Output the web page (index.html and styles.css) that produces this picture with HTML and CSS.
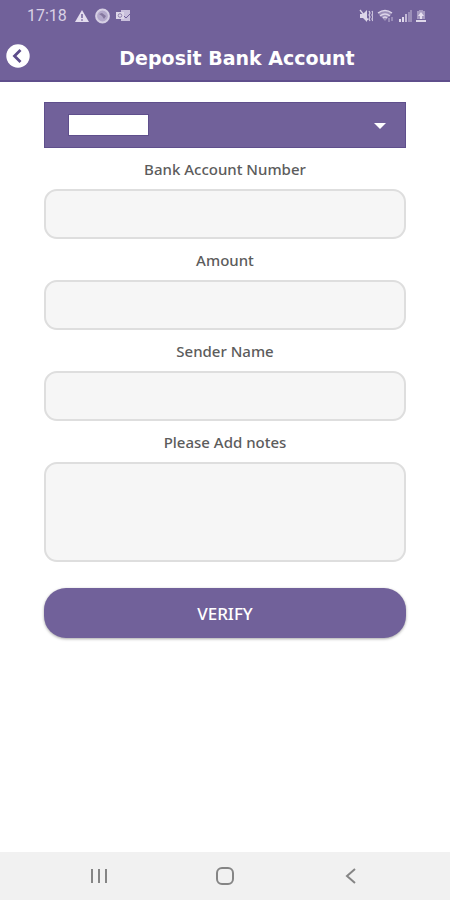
FILE: index.html
```html
<!DOCTYPE html>
<html lang="en">
<head>
<meta charset="utf-8">
<meta name="viewport" content="width=device-width, initial-scale=1">
<title>Deposit Bank Account</title>
<link rel="stylesheet" href="styles.css">
</head>
<body>
<header class="top">
  <div class="status">
    <div class="status-group">
      <span class="clock">17:18</span>
      <svg width="14" height="14" viewBox="0 0 14 14" aria-hidden="true"><path d="M7 1 L14 13 H0 Z" fill="#e3dcee"/><path d="M7 5V9M7 10.3V11.8" stroke="#71619a" stroke-width="1.5"/></svg>
      <svg width="15" height="16" viewBox="0 0 15 16" aria-hidden="true"><circle cx="7.5" cy="8" r="6.4" fill="#b3a8cb" stroke="#d6cfe4" stroke-width="2"/><path d="M4 6 L7 5 L11 8 L9 11 L7 8 Z" fill="#85779f"/></svg>
      <svg width="15" height="14" viewBox="0 0 15 14" aria-hidden="true"><path d="M5 1H14V12H5Z" fill="#c9c0dc"/><path d="M0 3H8V10H0Z" fill="#ded7e9"/><circle cx="4" cy="6.5" r="1.8" fill="none" stroke="#8f82ae"/><path d="M8 7L10 9L14 5" fill="none" stroke="#71619a"/></svg>
    </div>
    <div class="status-group status-right">
      <svg width="14" height="14" viewBox="0 0 14 14" aria-hidden="true"><path d="M1 5H4L8 1V13L4 9H1Z" fill="#ddd6e9"/><path d="M1 1L9 11" stroke="#ddd6e9" stroke-width="1.3"/><path d="M10 2L11 4L10 6L11 8L10 10L11 12M13 2L14 4L13 6L14 8L13 10L14 12" fill="none" stroke="#d5cde3" stroke-width="1.2"/></svg>
      <svg width="18" height="14" viewBox="0 0 18 14" aria-hidden="true"><path d="M1 4Q8-1 15 4L8 12Z" fill="#9d90ba"/><path d="M1 4Q8-1 15 4M3 7Q8 3 13 7M6 9Q8 7 10 9" fill="none" stroke="#ddd5e9" stroke-width="1.5"/><path d="M12 9V13M15 8V12" stroke="#c1b7d5"/></svg>
      <svg width="13" height="14" viewBox="0 0 13 14" aria-hidden="true"><path d="M1 10V13M4 8V13" stroke="#e0d9eb" stroke-width="2"/><path d="M7 5V13" stroke="#c3b9d6" stroke-width="2"/><path d="M10 3V13M12 1V13" stroke="#a99dc2" stroke-width="1.5"/></svg>
      <svg width="10" height="14" viewBox="0 0 10 14" aria-hidden="true"><path d="M3 1H7V2H9V10H1V2H3Z" fill="#a79bc1"/><path d="M5 3L2 7H4V10H6V7H8Z" fill="#e7e0f0"/><path d="M0 11H10V13H0Z" fill="#ded7e9"/></svg>
    </div>
  </div>
  <div class="bar">
    <button class="back" type="button" aria-label="Back">
      <svg width="24" height="24" viewBox="0 0 24 24" aria-hidden="true"><circle cx="12" cy="12" r="11.7" fill="#fff"/><path d="M14.5 6L8.5 12L14.5 18" fill="none" stroke="#5d4d8b" stroke-width="2.8"/></svg>
    </button>
    <h1 class="title">Deposit Bank Account</h1>
  </div>
</header>
<main class="content">
  <form class="form">
    <div class="picker">
      <select class="picker-select" aria-label="Bank"><option></option></select>
      <span class="picker-value"></span>
      <svg class="picker-arrow" width="12" height="6" viewBox="0 0 12 6" aria-hidden="true"><path d="M0 0H12L6 6Z" fill="#fff"/></svg>
    </div>
    <label class="label" for="account">Bank Account Number</label>
    <input class="field" id="account" type="text">
    <label class="label" for="amount">Amount</label>
    <input class="field" id="amount" type="text">
    <label class="label" for="sender">Sender Name</label>
    <input class="field" id="sender" type="text">
    <label class="label" for="notes">Please Add notes</label>
    <textarea class="field notes" id="notes"></textarea>
    <button class="verify" type="button">VERIFY</button>
  </form>
</main>
<nav class="nav">
  <button class="nav-button" type="button" aria-label="Recents"><svg width="20" height="20" viewBox="0 0 20 20" aria-hidden="true"><path d="M3 3V17M10 3V17M17 3V17" stroke="#858585" stroke-width="2"/></svg></button>
  <button class="nav-button" type="button" aria-label="Home"><svg width="20" height="20" viewBox="0 0 20 20" aria-hidden="true"><rect x="2" y="2" width="16" height="16" rx="5" fill="none" stroke="#858585" stroke-width="2"/></svg></button>
  <button class="nav-button" type="button" aria-label="Go back"><svg width="20" height="20" viewBox="0 0 20 20" aria-hidden="true"><path d="M14 3L6 10L14 17" fill="none" stroke="#858585" stroke-width="2"/></svg></button>
</nav>
</body>
</html>
```

FILE: styles.css
```css
* {
  box-sizing: border-box;
}

body {
  margin: 0;
  min-height: 100vh;
  display: flex;
  flex-direction: column;
  background: #fff;
  color: #5c5c5c;
  font-family: "Noto Sans", sans-serif;
  font-size: 15px;
}

button {
  margin: 0;
  padding: 0;
  border: 0;
  background: none;
  font: inherit;
  cursor: pointer;
}

svg {
  display: block;
}

.top {
  background: #71619a;
  border-bottom: 2px solid #5f4f8c;
}

.status {
  display: flex;
  justify-content: space-between;
  align-items: center;
  height: 32px;
  padding: 0 24px 0 27px;
}

.status-group {
  display: flex;
  align-items: center;
  gap: 6px;
}

.status-right {
  gap: 4px;
}

.clock {
  margin-right: 2px;
  color: #d9d1e5;
  font-family: Roboto, sans-serif;
  font-size: 16px;
  line-height: 24px;
}

.bar {
  display: flex;
  align-items: center;
  height: 48px;
  padding: 0 6px;
}

.back {
  flex: none;
}

.title {
  flex: 1;
  margin: 0;
  padding-top: 4px;
  color: #fff;
  font-family: "DejaVu Sans", sans-serif;
  font-size: 19px;
  font-weight: 700;
  line-height: 24px;
  text-align: center;
}

.content {
  flex: 1;
  padding: 20px 44px;
}

.form {
  display: flex;
  flex-direction: column;
}

.picker {
  position: relative;
  height: 46px;
}

.picker-select {
  display: block;
  width: 100%;
  height: 100%;
  padding: 0 24px;
  border: 1px solid #5f4f8c;
  border-radius: 0;
  appearance: none;
  background: #71619a;
  color: #fff;
  font: inherit;
}

.picker-value {
  position: absolute;
  top: 12px;
  left: 24px;
  width: 81px;
  height: 22px;
  border: 1px solid #5f4f8c;
  background: #fff;
  pointer-events: none;
}

.picker-arrow {
  position: absolute;
  top: 21px;
  right: 20px;
  pointer-events: none;
}

.label {
  padding-top: 2px;
  font-weight: 500;
  line-height: 39px;
  text-align: center;
}

.field {
  display: block;
  width: 100%;
  height: 50px;
  padding: 8px 16px;
  border: 2px solid #dedede;
  border-radius: 13px;
  background: #f6f6f6;
  color: inherit;
  font: inherit;
}

.notes {
  height: 100px;
  resize: none;
}

.verify {
  height: 50px;
  margin-top: 26px;
  padding-top: 1px;
  border-radius: 22px;
  background: #71619a;
  box-shadow: 0 1px 3px rgba(0, 0, 0, 0.35);
  color: #fff;
  font-size: 17px;
  font-weight: 500;
}

.nav {
  display: flex;
  justify-content: space-around;
  align-items: center;
  height: 48px;
  padding: 0 36px;
  background: #f1f1f1;
}

.nav-button {
  padding: 8px;
}
```
